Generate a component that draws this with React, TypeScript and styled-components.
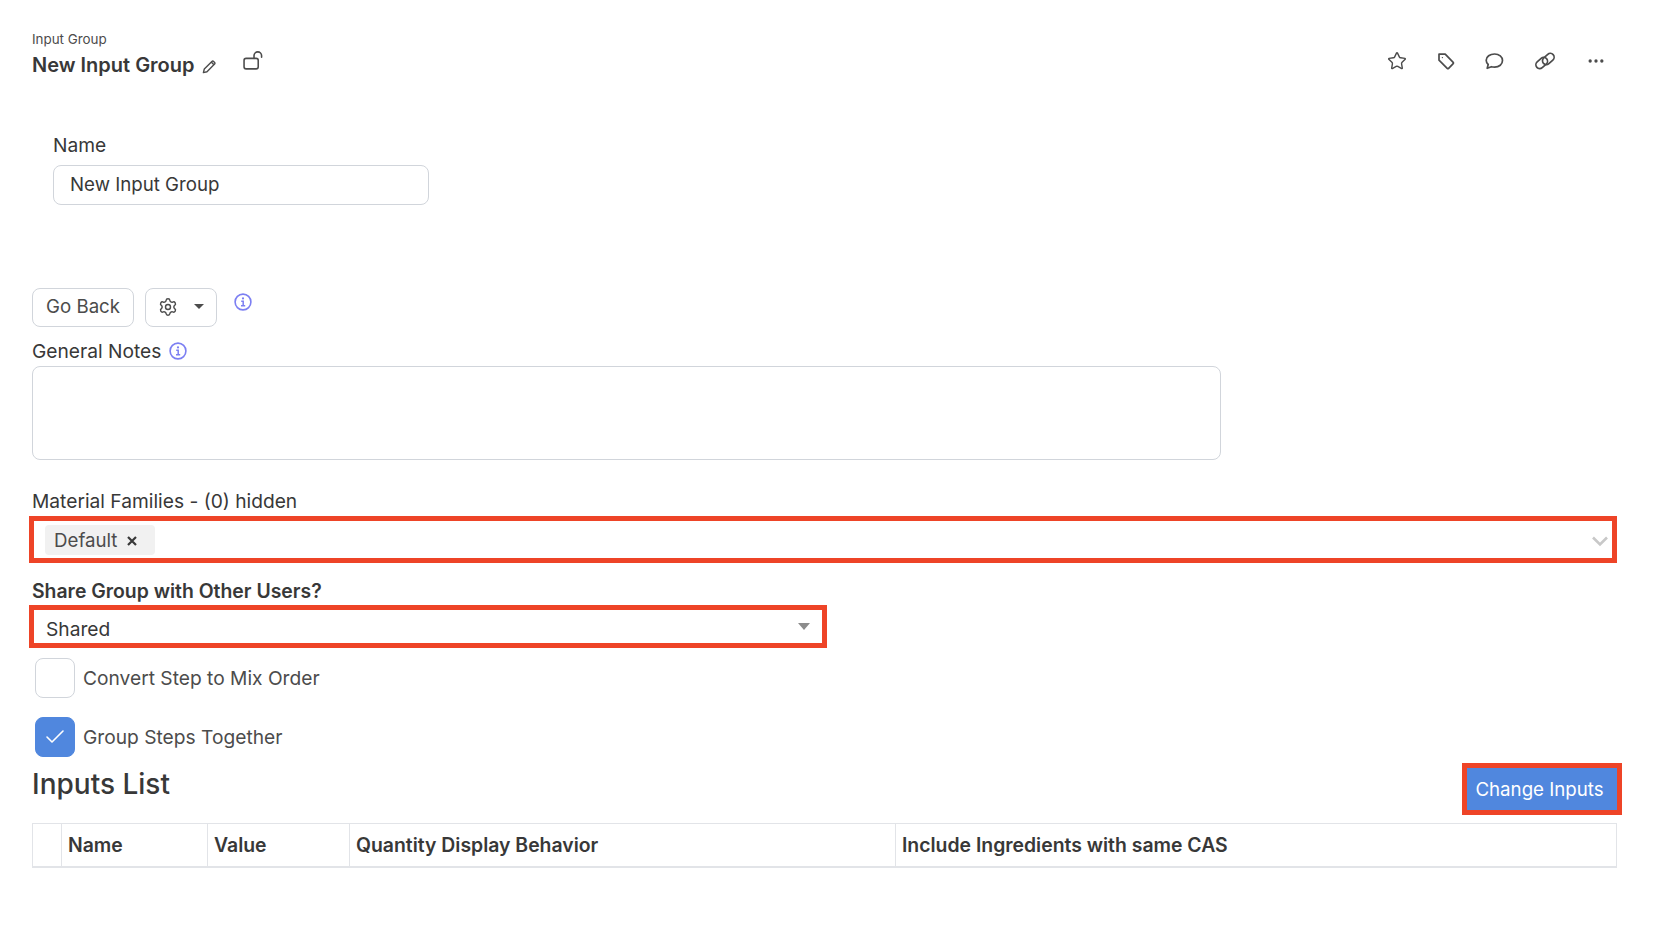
import styled, { createGlobalStyle } from "styled-components";
import { Check, Ellipsis, Settings, Star } from "lucide-react";

const TEXT = "#383838";
const MUTED = "#4c4c4c";
const LINE = "#d1d5db";
const RED = "#ee4427";
const BLUE = "#5087de";
const VIOLET = "#7c7ff2";

const GlobalStyle = createGlobalStyle`
  html, body {
    margin: 0;
    padding: 0;
    background: #fff;
    color: ${TEXT};
    font-family: Inter, "Noto Sans", sans-serif;
  }
  * {
    box-sizing: border-box;
  }
`;

const Page = styled.div`
  width: 1670px;
  height: 940px;
  padding: 31px 53px 0 32px;
  overflow: hidden;
`;

const Header = styled.header`
  display: flex;
  justify-content: space-between;
  align-items: flex-start;
  height: 102px;
`;

const TitleBlock = styled.div`
  display: flex;
  flex-direction: column;
`;

const Crumb = styled.div`
  font-size: 13.4px;
  line-height: 16px;
  color: ${MUTED};
`;

const TitleRow = styled.div`
  display: flex;
  align-items: center;
  height: 36px;
`;

const Title = styled.h1`
  margin: 0;
  font-size: 20px;
  line-height: 32px;
  font-weight: 600;
`;

const EditIcon = styled.svg`
  margin: 3px 0 0 7px;
  color: ${MUTED};
`;

const LockIcon = styled.svg`
  margin: -8px 0 0 26px;
  color: ${MUTED};
`;

const Actions = styled.div`
  display: flex;
  align-items: center;
  gap: 28.7px;
  margin: 18px 11px 0 0;
  color: ${MUTED};
`;

const NameField = styled.div`
  margin: 0 0 0 21px;
  width: 376px;
`;

const Label = styled.label`
  display: flex;
  align-items: center;
  gap: 8px;
  font-size: 19.2px;
  line-height: 24px;
  color: ${TEXT};
`;

const BoldLabel = styled(Label)`
  font-size: 19.4px;
  font-weight: 600;
`;

const NameInput = styled.div`
  height: 40px;
  margin-top: 8px;
  padding: 0 16px 1px;
  display: flex;
  align-items: center;
  border: 1px solid ${LINE};
  border-radius: 8px;
  font-size: 18.7px;
`;

const ButtonRow = styled.div`
  display: flex;
  align-items: flex-start;
  gap: 11px;
  margin-top: 83px;
`;

const OutlineButton = styled.button`
  height: 39px;
  padding: 0 13px 2px;
  display: flex;
  align-items: center;
  background: #fff;
  border: 1px solid ${LINE};
  border-radius: 8px;
  color: ${MUTED};
  font: 18.7px Inter, sans-serif;
`;

const GearButton = styled(OutlineButton)`
  width: 72px;
  padding: 0 0 1px 12px;
  gap: 16px;
`;

const Caret = styled.span<{ $color: string }>`
  width: 0;
  height: 0;
  margin-top: -2px;
  border-left: 5px solid transparent;
  border-right: 5px solid transparent;
  border-top: 5px solid ${(p) => p.$color};
`;

const ShareCaret = styled(Caret)`
  border-left-width: 6px;
  border-right-width: 6px;
  border-top-width: 7px;
  margin-top: -6px;
`;

const RowInfo = styled.span`
  display: flex;
  margin: 5px 0 0 6px;
`;

const NotesLabel = styled(Label)`
  margin-top: 12px;
`;

const NotesArea = styled.div`
  width: 1189px;
  height: 94px;
  margin-top: 3px;
  border: 1px solid ${LINE};
  border-radius: 8px;
`;

const FamiliesLabel = styled(Label)`
  margin-top: 29px;
`;

const RedBox = styled.div`
  margin-left: -3px;
  border: 5px solid ${RED};
  display: flex;
  align-items: center;
  justify-content: space-between;
`;

const FamiliesBox = styled(RedBox)`
  width: 1588px;
  height: 47px;
  margin-top: 3px;
  padding: 1px 4px 0 11px;
`;

const Chip = styled.span`
  display: inline-flex;
  align-items: center;
  gap: 10px;
  height: 30px;
  padding: 0 18px 0 9px;
  background: #f1f1f1;
  border-radius: 4px;
  font-size: 18.7px;
  color: ${MUTED};
`;

const ChipClose = styled.svg`
  color: ${TEXT};
  margin-top: 2px;
`;

const Chevron = styled.svg`
  color: #c8c8c8;
  margin-top: 3px;
`;

const ShareLabel = styled(BoldLabel)`
  margin-top: 16px;
`;

const ShareBox = styled(RedBox)`
  width: 798px;
  height: 43px;
  margin-top: 2px;
  padding: 5px 12px 0 12px;
  font-size: 19.2px;
  line-height: 24px;
`;

const CheckRow = styled.div`
  display: flex;
  align-items: center;
  gap: 8px;
  height: 40px;
  margin: 10px 0 0 3px;
  font-size: 19.2px;
  color: ${MUTED};
`;

const SecondCheckRow = styled(CheckRow)`
  margin-top: 19px;
`;

const CheckBox = styled.span<{ $on?: boolean }>`
  width: 40px;
  height: 40px;
  display: flex;
  align-items: center;
  justify-content: center;
  border: 1px solid ${(p) => (p.$on ? BLUE : LINE)};
  border-radius: 8px;
  background: ${(p) => (p.$on ? BLUE : "#fff")};
  color: #fff;
`;

const ListHeader = styled.div`
  display: flex;
  justify-content: space-between;
  align-items: center;
  height: 52px;
  margin: 6px -5px 0 0;
`;

const ListTitle = styled.h2`
  margin: 0 0 10px;
  font-size: 28px;
  line-height: 36px;
  font-weight: 500;
`;

const ChangeButton = styled.button`
  width: 160px;
  height: 52px;
  background: ${BLUE};
  border: 5px solid ${RED};
  color: #fff;
  font: 400 18.7px Inter, sans-serif;
  padding: 1px 5px 0 0;
`;

const Table = styled.div`
  display: grid;
  grid-template-columns: 29px 146px 142px 546px 1fr;
  width: 1585px;
  height: 45px;
  margin-top: 8px;
  border: 1px solid #e2e4e8;
  border-bottom-width: 2px;
`;

const HeadCell = styled.div`
  display: flex;
  align-items: center;
  padding-left: 6px;
  font-size: 19.4px;
  font-weight: 600;
  border-right: 1px solid #e2e4e8;

  &:last-child {
    border-right: 0;
  }
`;

function InfoMark() {
  return (
    <svg width="18" height="18" viewBox="0 0 18 18" fill="none" stroke={VIOLET} style={{ flex: "none" }}>
      <circle cx="9" cy="9" r="7.9" strokeWidth="1.6" />
      <circle cx="9" cy="5.4" r="1.1" fill={VIOLET} stroke="none" />
      <path d="M7.2 8.2H9.2V12.6M7 12.8H11.2" strokeWidth="1.5" />
    </svg>
  );
}

function TagMark() {
  return (
    <svg width="20" height="20" viewBox="0 0 20 20" fill="none" stroke="currentColor" strokeWidth="1.7" strokeLinejoin="round">
      <path d="M3 3.2h6.2l8 8.1a1 1 0 0 1 0 1.4l-4.6 4.6a1 1 0 0 1-1.4 0L3 9.2Z" />
      <circle cx="6.4" cy="6.6" r="0.7" fill="currentColor" stroke="none" />
    </svg>
  );
}

function BubbleMark() {
  return (
    <svg width="20" height="20" viewBox="0 0 20 20" fill="none" stroke="currentColor" strokeWidth="1.7" strokeLinejoin="round">
      <path d="M9.6 3C4.9 3 1.2 5.6 1.2 9.3c0 1.7.8 3.1 2 4.2l-1 3.8 4.2-1.6c1 .3 2.1.4 3.2.4 4.6 0 7.9-2.8 7.9-6.6S14.2 3 9.6 3Z" />
    </svg>
  );
}

function LinkMark() {
  return (
    <svg width="24" height="24" viewBox="0 0 24 24" fill="none" stroke="currentColor" strokeWidth="1.7">
      <rect x="2.2" y="10.2" width="13" height="7.6" rx="3.8" transform="rotate(-42 8.7 14)" />
      <rect x="8.8" y="6.2" width="13" height="7.6" rx="3.8" transform="rotate(-42 15.3 10)" />
    </svg>
  );
}

const columns = ["", "Name", "Value", "Quantity Display Behavior", "Include Ingredients with same CAS"];

export default function App() {
  return (
    <>
      <GlobalStyle />
      <Page>
        <Header>
          <TitleBlock>
            <Crumb>Input Group</Crumb>
            <TitleRow>
              <Title>New Input Group</Title>
              <EditIcon width="15" height="15" viewBox="0 0 15 15" fill="none" stroke="currentColor" strokeWidth="1.4" strokeLinejoin="round">
                <path d="M1.4 13.6l.9-3.6 7.6-7.6a1.2 1.2 0 0 1 1.7 0l1 1a1.2 1.2 0 0 1 0 1.7L5 12.7Z" />
                <path d="M9.2 3.1l2.7 2.7" />
              </EditIcon>
              <LockIcon width="21" height="21" viewBox="0 0 20 20" fill="none" stroke="currentColor" strokeWidth="1.5">
                <rect x="1" y="7" width="13.5" height="10" rx="2" />
                <path d="M10.5 7V4.4a3.6 3.6 0 0 1 7.2 0V6" strokeLinecap="round" />
              </LockIcon>
            </TitleRow>
          </TitleBlock>
          <Actions>
            <Star size={20} strokeWidth={1.7} />
            <TagMark />
            <BubbleMark />
            <LinkMark />
            <Ellipsis size={20} strokeWidth={2} />
          </Actions>
        </Header>

        <NameField>
          <Label>Name</Label>
          <NameInput>New Input Group</NameInput>
        </NameField>

        <ButtonRow>
          <OutlineButton>Go Back</OutlineButton>
          <GearButton>
            <Settings size={20} strokeWidth={1.7} />
            <Caret $color={MUTED} />
          </GearButton>
          <RowInfo>
            <InfoMark />
          </RowInfo>
        </ButtonRow>

        <NotesLabel>
          General Notes <InfoMark />
        </NotesLabel>
        <NotesArea />

        <FamiliesLabel>Material Families - (0) hidden</FamiliesLabel>
        <FamiliesBox>
          <Chip>
            Default
            <ChipClose width="10" height="10" viewBox="0 0 10 10" stroke="currentColor" strokeWidth="2.2">
              <path d="M1 1l8 8M9 1l-8 8" />
            </ChipClose>
          </Chip>
          <Chevron width="16" height="11" viewBox="0 0 16 11" fill="none" stroke="currentColor" strokeWidth="2.6">
            <path d="M1 1.5l7 7 7-7" />
          </Chevron>
        </FamiliesBox>

        <ShareLabel>Share Group with Other Users?</ShareLabel>
        <ShareBox>
          Shared
          <ShareCaret $color="#8c8c8c" />
        </ShareBox>

        <CheckRow>
          <CheckBox />
          Convert Step to Mix Order
        </CheckRow>
        <SecondCheckRow>
          <CheckBox $on>
            <Check size={24} strokeWidth={1.6} />
          </CheckBox>
          Group Steps Together
        </SecondCheckRow>

        <ListHeader>
          <ListTitle>Inputs List</ListTitle>
          <ChangeButton>Change Inputs</ChangeButton>
        </ListHeader>

        <Table>
          {columns.map((c) => (
            <HeadCell key={c}>{c}</HeadCell>
          ))}
        </Table>
      </Page>
    </>
  );
}
